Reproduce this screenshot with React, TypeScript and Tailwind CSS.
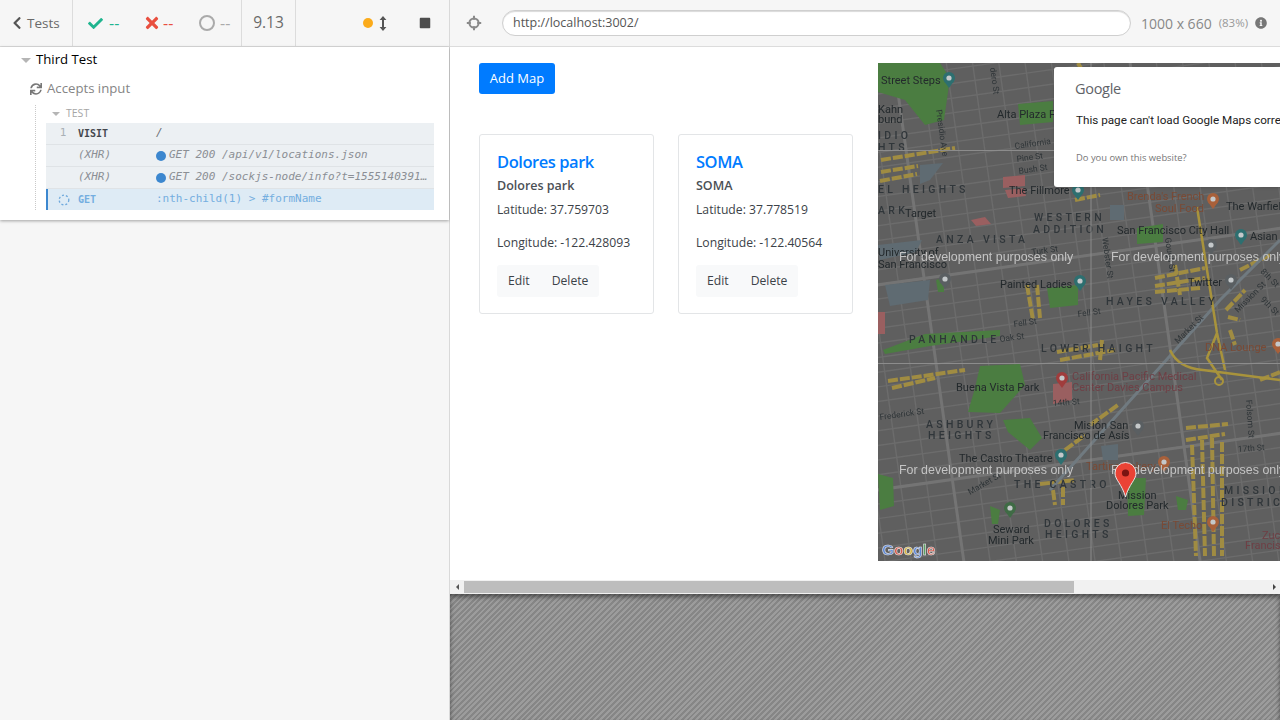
import type { ReactNode } from 'react';
import { FaCheck, FaChevronLeft, FaInfoCircle, FaStop, FaSync, FaTimes } from 'react-icons/fa';

const SANS = 'font-["Open_Sans",sans-serif]';

const parks = [
  '878,63 940,63 950,78 944,120 925,125 905,100 878,92',
  '1018,104 1053,101 1053,122 1020,125',
  '1047,288 1078,285 1078,305 1050,308',
  '883,350 925,334 1000,330 1000,336 930,346 885,354',
  '980,366 1020,364 1025,385 1000,413 968,412 975,388',
  '1003,420 1030,418 1042,438 1030,450 1008,432',
  '878,474 893,478 894,506 880,510',
  '1127,478 1146,478 1144,515 1128,516',
  '1137,228 1163,224 1163,242 1137,244',
  '936,280 944,278 944,292 938,292',
  '990,506 1000,510 998,524 992,524',
  '1176,496 1188,500 1186,510 1178,510',
];
const reds = [
  '1003,177 1025,175 1025,186 1003,188',
  '1005,190 1024,188 1026,196 1008,198',
  '971,220 985,217 991,224 976,226',
  '878,312 885,312 885,334 878,334',
  '1053,384 1072,382 1072,400 1053,404',
];
const blues = [
  '885,285 930,280 928,300 890,306',
  '878,245 922,240 916,252 880,260',
  '1101,446 1118,444 1118,460 1103,460',
  '1110,205 1124,205 1124,220 1110,220',
  '920,165 943,163 930,180 920,184',
];

// runs of transit stops drawn as broken yellow strokes
const transit = [
  'M881 160L955 148',
  'M881 172L918 166',
  'M880 181L917 174',
  'M1027 285L1033 320',
  'M1037 285L1040 318',
  'M1057 352L1098 345',
  'M1060 360L1115 350',
  'M1102 340L1100 360',
  'M1155 278L1205 268',
  'M1155 286L1205 278',
  'M1155 292L1200 288',
  'M1175 265L1180 295',
  'M1226 310L1245 290',
  'M1228 317L1240 320',
  'M1240 270L1270 255',
  'M1075 200L1100 195',
  'M1078 63L1082 70',
  'M888 381L965 370',
  'M892 388L935 378',
  'M1090 425L1118 405',
  'M1065 450L1085 435',
  'M1053 490L1055 505',
  'M1063 487L1063 505',
  'M1040 484L1075 480',
  'M1192 445L1196 556',
  'M1202 440L1205 556',
  'M1212 438L1214 556',
  'M1222 442L1222 556',
  'M1186 428L1228 424',
  'M1186 440L1225 434',
  'M1260 380L1280 372',
  'M1230 330L1235 345',
];

type Label = [string, number, number, number?, string?, number?];

// text, x, y, font size, colour, rotation
const labels: Label[] = [
  ['Street Steps', 881, 84],
  ['Kahn', 878, 113],
  ['bund', 878, 123],
  ['Alta Plaza P', 997, 118],
  ['The Fillmore', 1009, 194],
  ['Target', 905, 217],
  ['University of', 878, 256],
  ['San Francisco', 878, 268],
  ['San Francisco City Hall', 1117, 234],
  ['The Warfield', 1226, 210],
  ['Asian', 1250, 240],
  ['Painted Ladies', 1000, 288],
  ['Twitter', 1188, 286],
  ['Buena Vista Park', 956, 391],
  ['Misión San', 1074, 429],
  ['Francisco de Asís', 1043, 439],
  ['The Castro Theatre', 959, 462],
  ['Mission', 1118, 499],
  ['Dolores Park', 1106, 509],
  ['Seward', 993, 533],
  ['Mini Park', 988, 544],
  ["Brenda's French", 1127, 200, 11, '#7a4a35'],
  ['Soul Food', 1155, 212, 11, '#7a4a35'],
  ['DNA Lounge', 1205, 351, 11, '#7a4a35'],
  ['California Pacific Medical', 1072, 380, 11, '#6f3f45'],
  ['Center Davies Campus', 1072, 391, 11, '#6f3f45'],
  ['Tartine Bakery', 1086, 470, 11, '#7a4a35'],
  ['El Techo', 1161, 529, 11, '#7a4a35'],
  ['Zuc', 1262, 539, 11, '#6f3f45'],
  ['Francis', 1245, 549, 11, '#6f3f45'],
  ['California', 1015, 149, 8.5, '#2f3538', -8],
  ['Pine St', 1017, 162, 8.5, '#2f3538', -8],
  ['Bush St', 1019, 174, 8.5, '#2f3538', -8],
  ['Turk St', 1032, 255, 8.5, '#2f3538', -8],
  ['Fell St', 1078, 317, 8.5, '#2f3538', -8],
  ['Fell St', 1014, 327, 8.5, '#2f3538', -8],
  ['Oak St', 1000, 342, 8.5, '#2f3538', -8],
  ['Frederick St', 880, 420, 8.5, '#2f3538', -8],
  ['14th St', 1053, 406, 8.5, '#2f3538', -4],
  ['17th St', 1238, 452, 8.5, '#2f3538', -4],
  ['dero St', 990, 68, 8.5, '#2f3538', 82],
  ['Presidio Ave', 936, 110, 8.5, '#2f3538', 82],
  ['Webster St', 1102, 238, 8.5, '#2f3538', 82],
  ['Gough St', 1165, 238, 8.5, '#2f3538', 82],
  ['Folsom St', 1246, 400, 8.5, '#2f3538', 86],
  ['Market St', 1178, 344, 8.5, '#2f3538', -45],
  ['Market St', 970, 495, 8.5, '#2f3538', -30],
  ['Mission St', 1238, 313, 8.5, '#2f3538', -45],
  ['8th St', 1260, 272, 8.5, '#2f3538', 45],
  ['9th St', 1260, 300, 8.5, '#2f3538', 45],
];

const districts: [string, number, number][] = [
  ['IDIO', 878, 139],
  ['HTS', 878, 151],
  ['EL HEIGHTS', 878, 193],
  ['ARK', 878, 214],
  ['WESTERN', 1034, 221],
  ['ADDITION', 1033, 233],
  ['ANZA VISTA', 936, 243],
  ['HAYES VALLEY', 1106, 305],
  ['PANHANDLE', 909, 343],
  ['LOWER HAIGHT', 1041, 352],
  ['ASHBURY', 926, 428],
  ['HEIGHTS', 928, 439],
  ['THE CASTRO', 1014, 488],
  ['MISSION', 1224, 494],
  ['DISTRICT', 1221, 506],
  ['DOLORES', 1044, 527],
  ['HEIGHTS', 1045, 538],
];

const pois: [number, number, string][] = [
  [949, 78, '#2d6f70'],
  [945, 279, '#5a5f62'],
  [1080, 281, '#2d6f70'],
  [1078, 190, '#2d6f70'],
  [1241, 235, '#2d6f70'],
  [1211, 245, '#5a5f62'],
  [1231, 280, '#5a5f62'],
  [1278, 344, '#a8603a'],
  [1213, 199, '#a8603a'],
  [1062, 378, '#a03c3c'],
  [1138, 426, '#5a5f62'],
  [1061, 455, '#2d6f70'],
  [1164, 462, '#a8603a'],
  [1213, 522, '#a8603a'],
  [1010, 508, '#3f6b45'],
];

const MapArt = () => {
  const h = Array.from({ length: 42 }, (_, i) => i);
  const v = Array.from({ length: 24 }, (_, i) => i);
  return (
    <svg
      viewBox="878 63 402 498"
      width="402"
      height="498"
      className="block blur-[0.45px]"
      fontFamily="Roboto, sans-serif"
    >
      <rect x="878" y="63" width="402" height="498" fill="#5f5f5f" />
      <g transform="rotate(-8 1080 310)" stroke="#6c6c6c" strokeWidth="1.4">
        {h.map((i) => (
          <line key={`h${i}`} x1="780" x2="1380" y1={10 + i * 14.5} y2={10 + i * 14.5} />
        ))}
        {v.map((i) => (
          <line key={`v${i}`} y1="-20" y2="640" x1={800 + i * 26} x2={800 + i * 26} />
        ))}
        <line x1="780" x2="1380" y1="257" y2="257" stroke="#747474" strokeWidth="3" />
        <line x1="780" x2="1380" y1="460" y2="460" stroke="#747474" strokeWidth="3" />
        <line y1="-20" y2="640" x1="930" x2="930" stroke="#747474" strokeWidth="3" />
        <line y1="-20" y2="640" x1="1164" x2="1164" stroke="#747474" strokeWidth="3" />
      </g>
      {parks.map((p) => (
        <polygon key={p} points={p} fill="#4b7d41" />
      ))}
      {reds.map((p) => (
        <polygon key={p} points={p} fill="#9a5f60" />
      ))}
      {blues.map((p) => (
        <polygon key={p} points={p} fill="#5f6b72" />
      ))}
      <g stroke="#a08c42" strokeWidth="4" strokeDasharray="10 2" fill="none">
        {transit.map((d) => (
          <path key={d} d={d} />
        ))}
      </g>
      <path d="M1050 490 L1220 300 L1280 240" stroke="#707a80" strokeWidth="3" fill="none" />
      <path
        d="M1197 207 L1217 333 L1225 370 M1170 350 Q1178 368 1203 370 L1280 380 M1217 333 L1207 358 L1222 380"
        stroke="#a8933c"
        strokeWidth="2.5"
        fill="none"
      />
      <circle cx="1219" cy="381" r="4" stroke="#a8933c" strokeWidth="2" fill="none" />
      {pois.map(([x, y, c]) => (
        <g key={`${x}-${y}`}>
          <circle cx={x} cy={y} r="6" fill={c} />
          <path d={`M${x - 5} ${y + 3} L${x} ${y + 10} L${x + 5} ${y + 3} Z`} fill={c} />
          <circle cx={x} cy={y} r="2.6" fill="#c4c8ca" />
        </g>
      ))}
      {labels.map(([t, x, y, size, color, rot], i) => (
        <text
          key={i}
          x={x}
          y={y}
          fontSize={size ?? 11}
          fill={color ?? '#23292c'}
          transform={rot ? `rotate(${rot} ${x} ${y})` : undefined}
        >
          {t}
        </text>
      ))}
      {districts.map(([t, x, y], i) => (
        <text key={i} x={x} y={y} fontSize="10.5" fontWeight="500" letterSpacing="3.3" fill="#30363a">
          {t}
        </text>
      ))}
      <path d="M1091 63V561M878 150.5H1280M878 363.5H1280" stroke="#8c8c8c" strokeWidth="1" />
      <g fontFamily="Liberation Sans, sans-serif" fontSize="12.45" fill="#c4c4c4">
        <text x="899" y="261">For development purposes only</text>
        <text x="1111" y="261">For development purposes only</text>
        <text x="899" y="474">For development purposes only</text>
        <text x="1111" y="474">For development purposes only</text>
      </g>
      <path
        d="M1125.5 497 C1122 484 1115 480 1115 473 A10.5 10.5 0 0 1 1136 473 C1136 480 1129 484 1125.5 497 Z"
        fill="#ea4335"
        stroke="#e8e8e8"
        strokeWidth="1"
      />
      <circle cx="1125.5" cy="473" r="3.6" fill="#7a1512" />
      <text x="882" y="555" fontFamily="Liberation Sans, sans-serif" fontWeight="700" fontSize="15.5" stroke="#e5e5e5" strokeWidth="0.6">
        <tspan fill="#5a86d8">G</tspan>
        <tspan fill="#d9584a">o</tspan>
        <tspan fill="#d8b53e">o</tspan>
        <tspan fill="#5a86d8">g</tspan>
        <tspan fill="#5aa064">l</tspan>
        <tspan fill="#d9584a">e</tspan>
      </text>
    </svg>
  );
};

const CommandRow = ({ num, name, children, active }: { num?: string; name: string; children: ReactNode; active?: boolean }) => (
  <div
    className={`flex items-center font-["DejaVu_Sans_Mono",monospace] text-[11px] ${
      active ? 'h-[21px] border-l-2 border-[#3c87cf] bg-[#deebf5]' : 'h-[22px] border-b border-[#dfe3e6] bg-[#ecf0f3]'
    }`}
  >
    <div className={`${active ? 'w-[30px]' : 'w-[32px]'} flex justify-center pl-[2px] text-[#a9b0b6]`}>
      {active ? (
        <svg width="12" height="12" viewBox="0 0 12 12" fill="none">
          <circle cx="6" cy="6" r="4.8" stroke="#6fa9dc" strokeWidth="1.3" strokeDasharray="2 2" />
        </svg>
      ) : (
        num
      )}
    </div>
    <div
      className={`w-[78px] ${
        name === '(XHR)' ? 'italic text-[#8b8f95]' : active ? 'text-[10px] font-bold text-[#74aee0]' : 'text-[10px] font-bold text-[#44484d]'
      }`}
    >
      {name}
    </div>
    <div className="flex min-w-0 flex-1 items-center pr-[3px]">{children}</div>
  </div>
);

const Dot = () => <span className="mr-[3px] h-[10px] w-[10px] shrink-0 rounded-full bg-[#3c87cf]" />;

const PlaceCard = ({ title, lat, lng }: { title: string; lat: string; lng: string }) => (
  <div className={`h-[180px] w-[175px] rounded-[3px] border border-[#e3e5e7] bg-white px-[17px] pt-[16px] ${SANS}`}>
    <div className="text-[16.5px] leading-[22px] font-semibold tracking-[-0.45px] text-[#007bff]">{title}</div>
    <div className="mt-[4px] text-[12.5px] leading-[17px] font-semibold text-[#4b5056]">{title}</div>
    <div className="mt-[7px] text-[12.2px] leading-[17px] text-[#3c4248]">Latitude: {lat}</div>
    <div className="mt-[16px] text-[12.2px] leading-[17px] text-[#3c4248]">Longitude: {lng}</div>
    <div className="mt-[14px] flex text-[12.2px] text-[#3c4248]">
      <button type="button" className="h-[32px] rounded-l-[3px] bg-[#f8f9fa] px-[11px]">
        Edit
      </button>
      <button type="button" className="h-[32px] rounded-r-[3px] bg-[#f8f9fa] px-[11px]">
        Delete
      </button>
    </div>
  </div>
);

export default function App() {
  return (
    <div className={`flex h-[720px] w-[1280px] overflow-hidden bg-[#f6f6f6] ${SANS}`}>
      {/* Reporter */}
      <div className="flex w-[450px] shrink-0 flex-col border-r border-[#d9d9d9]">
        <div className="flex h-[47px] shrink-0 items-center border-b border-[#dcdcdc] bg-[#f6f6f6] text-[#6a6a6a]">
          <div className="flex h-full w-[73px] items-center gap-[3px] border-r border-[#dcdcdc] pl-[10px] text-[13.5px]">
            <FaChevronLeft size={14} className="text-[#555]" />
            <span>Tests</span>
          </div>
          <div className="flex h-full w-[169px] items-center border-r border-[#dcdcdc] pl-[15px] text-[16px]">
            <FaCheck size={15} className="text-[#1fb58f]" />
            <span className="ml-[6px] w-[34px] text-[#1fb58f]">--</span>
            <FaTimes size={18} className="text-[#e94f3f]" />
            <span className="ml-[2px] w-[36px] text-[#e94f3f]">--</span>
            <span className="h-[16px] w-[16px] rounded-full border-2 border-[#aaaaaa]" />
            <span className="ml-[5px] text-[#aaaaaa]">--</span>
          </div>
          <div className="flex h-full w-[54px] items-center justify-center border-r border-[#dcdcdc] text-[15.5px]">9.13</div>
          <div className="flex h-full flex-1 items-center pl-[67px]">
            <span className="h-[10px] w-[10px] rounded-full bg-[#fbab1b]" />
            <svg width="8" height="15" viewBox="0 0 8 15" className="ml-[6px] text-[#555]" fill="currentColor">
              <path d="M4 0 7.4 4H5v7h2.4L4 15 .6 11H3V4H.6z" />
            </svg>
            <FaStop size={12} className="ml-[32px] text-[#4d4d4d]" />
          </div>
        </div>

        <div className="h-[173px] shrink-0 bg-white pt-[3px] shadow-[0_1px_3px_rgba(0,0,0,0.35)]">
          <div className="flex h-[20px] items-center pl-[21px] text-[13.2px] text-black">
            <span className="h-0 w-0 border-x-[5px] border-t-[5px] border-x-transparent border-t-[#b5b5b5]" />
            <span className="ml-[5px]">Third Test</span>
          </div>
          <div className="mt-[9px] flex h-[20px] items-center pl-[30px] text-[13.2px] text-[#858585]">
            <FaSync size={12} className="text-[#777]" />
            <span className="ml-[5px]">Accepts input</span>
          </div>
          <div className="mt-[6px] ml-[35px] border-l border-dotted border-[#c9c9c9] pl-[10px]">
            <div className="flex h-[18px] items-center pl-[6px] text-[10.5px] text-[#a5a5a5]">
              <span className="h-0 w-0 border-x-[4.5px] border-t-[4.5px] border-x-transparent border-t-[#b5b5b5]" />
              <span className="ml-[6px]">TEST</span>
            </div>
            <div className="w-[388px]">
              <CommandRow num="1" name="VISIT">
                <span className="italic text-[#6c7077]">/</span>
              </CommandRow>
              <CommandRow name="(XHR)">
                <Dot />
                <span className="truncate italic text-[#8b8f95]">GET 200 /api/v1/locations.json</span>
              </CommandRow>
              <CommandRow name="(XHR)">
                <Dot />
                <span className="truncate italic text-[#8b8f95]">GET 200 /sockjs-node/info?t=1555140391621</span>
              </CommandRow>
              <CommandRow name="GET" active>
                <span className="text-[#74aee0]">:nth-child(1) &gt; #formName</span>
              </CommandRow>
            </div>
          </div>
        </div>
      </div>

      {/* App preview */}
      <div className="flex min-w-0 flex-1 flex-col">
        <div className="flex h-[47px] shrink-0 items-center border-b border-[#dcdcdc] bg-[#f6f6f6] pl-[16px] text-[#777]">
          <svg width="16" height="16" viewBox="0 0 16 16" fill="none" stroke="#8a8a8a" strokeWidth="2">
            <circle cx="8" cy="8" r="4.6" />
            <path d="M8 .8v4M8 11.2v4M.8 8h4M11.2 8h4" />
          </svg>
          <div className="ml-[20px] flex h-[26px] w-[629px] items-center rounded-full border border-[#cfcfcf] bg-white pl-[10px] text-[12.5px] text-[#555] shadow-[inset_0_1px_1px_rgba(0,0,0,0.15)]">
            http://localhost:3002/
          </div>
          <span className="ml-[10px] text-[14px] text-[#888]">1000 x 660</span>
          <span className="ml-[7px] text-[11.5px] text-[#999]">(83%)</span>
          <FaInfoCircle size={12} className="ml-[7px] text-[#777]" />
        </div>

        <div className="flex h-[533px] shrink-0 overflow-hidden bg-white pt-[16px]">
          <div className="w-[428px] shrink-0 pl-[29px]">
            <button
              type="button"
              className={`h-[31px] w-[76px] rounded-[3px] bg-[#007bff] text-[13px] font-medium text-white ${SANS}`}
            >
              Add Map
            </button>
            <div className="mt-[40px] flex gap-[24px]">
              <PlaceCard title="Dolores park" lat="37.759703" lng="-122.428093" />
              <PlaceCard title="SOMA" lat="37.778519" lng="-122.40564" />
            </div>
          </div>
          <div className="relative h-[498px] w-[402px] shrink-0 overflow-hidden">
            <MapArt />
            {/* Maps error dialog */}
            <div className='absolute top-[4px] left-[176px] h-[120px] w-[300px] rounded-l-[3px] bg-white pt-[13px] pl-[21px] font-["Roboto",sans-serif] shadow-sm'>
              <div className='text-[14.5px] leading-[18px] tracking-[-0.3px] text-[#5f6368] font-["Open_Sans",sans-serif]'>Google</div>
              <div className="mt-[15px] pl-[1px] text-[11.7px] leading-[14px] whitespace-nowrap text-[#222]">
                This page can't load Google Maps correctly.
              </div>
              <div className="mt-[25px] pl-[1px] text-[9.4px] leading-[12px] text-[#777] font-['Open_Sans',sans-serif]">Do you own this website?</div>
            </div>
          </div>
        </div>

        {/* Horizontal scrollbar */}
        <div className="flex h-[14px] shrink-0 items-center bg-[#f1f1f1]">
          <div className="flex w-[14px] justify-center">
            <span className="h-0 w-0 border-y-[3px] border-r-[3px] border-y-transparent border-r-[#555]" />
          </div>
          <div className="h-[12px] w-[610px] bg-[#bdbdbd]" />
          <div className="flex flex-1 justify-end pr-[4px]">
            <span className="h-0 w-0 border-y-[3px] border-l-[3px] border-y-transparent border-l-[#444]" />
          </div>
        </div>

        <div className="flex-1 bg-[repeating-linear-gradient(135deg,#868686,#868686_2px,#9c9c9c_2px,#9c9c9c_4px)] shadow-[inset_0_3px_4px_rgba(0,0,0,0.45)]" />
      </div>
    </div>
  );
}
